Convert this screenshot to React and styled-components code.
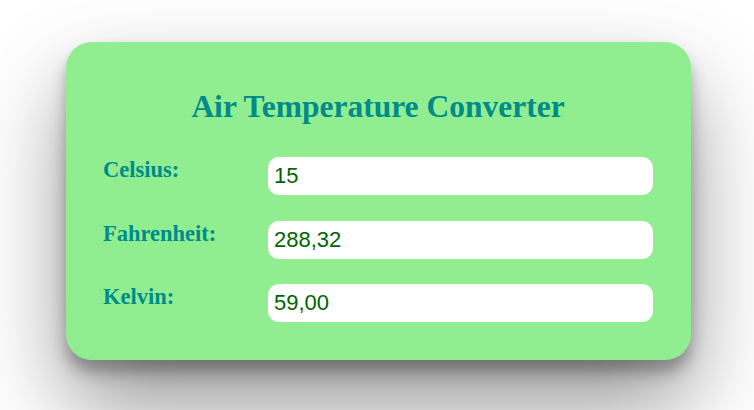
import React from "react";
import styled, { createGlobalStyle } from "styled-components";

const Global = createGlobalStyle`
  html, body { margin: 0; padding: 0; background: #fff; }
  body { font-family: "Liberation Serif", "Times New Roman", serif; }
`;

const Page = styled.div`
  width: 754px;
  height: 410px;
  display: flex;
  justify-content: center;
  align-items: flex-start;
  padding-top: 42px;
  box-sizing: border-box;
  overflow: hidden;
`;

const Card = styled.div`
  width: 625px;
  height: 318px;
  box-sizing: border-box;
  background: #90ee90;
  border-radius: 26px;
  box-shadow: 0 12px 16px rgba(0, 0, 0, 0.3), 0 45px 90px rgba(0, 0, 0, 0.42);
  padding: 0 38px 0 37px;
  display: flex;
  flex-direction: column;
  margin-left: 3px;
`;

const Title = styled.h2`
  margin: 47px 0 32px;
  text-align: center;
  font-family: "Liberation Serif", "Times New Roman", serif;
  font-weight: bold;
  font-size: 31.5px;
  line-height: 36px;
  color: #008b8b;
`;

const Rows = styled.div`
  display: flex;
  flex-direction: column;
  gap: 25.5px;
`;

const Row = styled.div`
  display: grid;
  grid-template-columns: 165px 1fr;
  align-items: start;
`;

const Label = styled.label`
  font-family: "Liberation Serif", "Times New Roman", serif;
  font-weight: bold;
  font-size: 22.5px;
  line-height: 26px;
  color: #008b8b;
`;

const Input = styled.input`
  box-sizing: border-box;
  width: 100%;
  height: 38px;
  border: none;
  outline: none;
  border-radius: 11px;
  background: #fff;
  padding: 0 6px;
  font-family: "Liberation Sans", Arial, sans-serif;
  font-size: 22px;
  color: #006400;
`;

const fields = [
  { label: "Celsius:", value: "15" },
  { label: "Fahrenheit:", value: "288,32" },
  { label: "Kelvin:", value: "59,00" },
];

export default function App() {
  return (
    <>
      <Global />
      <Page>
        <Card>
          <Title>Air Temperature Converter</Title>
          <Rows>
            {fields.map((f) => (
              <Row key={f.label}>
                <Label>{f.label}</Label>
                <Input defaultValue={f.value} readOnly />
              </Row>
            ))}
          </Rows>
        </Card>
      </Page>
    </>
  );
}
